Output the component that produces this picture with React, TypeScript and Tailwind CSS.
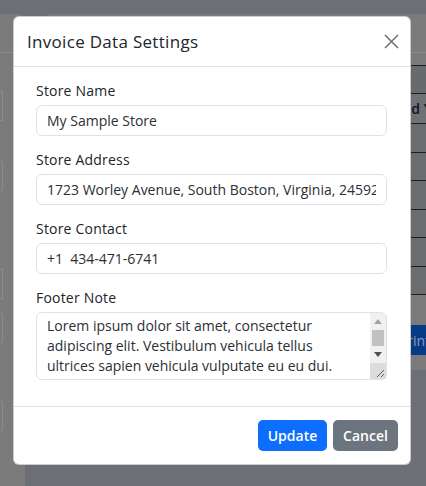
const fields = [
  { label: 'Store Name', value: 'My Sample Store' },
  { label: 'Store Address', value: '1723 Worley Avenue, South Boston, Virginia, 24592' },
  { label: 'Store Contact', value: '+1  434-471-6741' },
];

const footerNote =
  'Lorem ipsum dolor sit amet, consectetur adipiscing elit. Vestibulum vehicula tellus ultrices sapien vehicula vulputate eu eu dui. Sed at lorem nec nisi facilisis porttitor. Curabitur a nulla non tortor feugiat commodo.';

// classic scrollbar + resize corner drawn over the textarea
function FakeScrollbar() {
  return (
    <div className="pointer-events-none absolute right-[1px] top-[1px] bottom-[1px] flex w-[16px] flex-col overflow-hidden rounded-tr-[5px] bg-[#f1f1f1]">
      <div className="flex h-[17px] items-center justify-center">
        <svg width="8" height="5" viewBox="0 0 8 5"><path d="M4 0 L8 5 L0 5 Z" fill="#a3a3a3" /></svg>
      </div>
      <div className="mx-[2px] h-[16px] bg-[#c1c1c1]" />
      <div className="flex h-[17px] items-center justify-center">
        <svg width="8" height="5" viewBox="0 0 8 5"><path d="M0 0 L8 0 L4 5 Z" fill="#505050" /></svg>
      </div>
      <div className="flex flex-1 items-end justify-end bg-[#dcdcdc] p-[1px]">
        <svg width="10" height="10" viewBox="0 0 10 10">
          <path d="M9 2 L2 9 M9 6 L6 9" stroke="#5a5a5a" strokeWidth="1" />
        </svg>
      </div>
    </div>
  );
}

export default function App() {
  return (
    <div
      className="relative h-[486px] w-[426px] overflow-hidden bg-[#6c7075]"
      style={{ fontFamily: '"Open Sans", "Noto Sans", sans-serif' }}
    >
      {/* dimmed page behind the dialog */}
      <div className="flex h-full gap-[20px] pt-[14px]">
        <div className="flex w-[25px] flex-col rounded-tr-[6px] bg-[#7b7b7b]">
          <div className="mt-[38px] border-t border-[#8a8a8a]" />
          <div className="mt-[38px] h-[30px] w-[3px] border border-l-0 border-[#8c8c8c]" />
          <div className="mt-[40px] h-[30px] w-[3px] border border-l-0 border-[#8c8c8c]" />
          <div className="mt-[78px] h-[30px] w-[3px] border border-l-0 border-[#8c8c8c]" />
          <div className="mt-[14px] h-[30px] w-[3px] border border-l-0 border-[#8c8c8c]" />
          <div className="mt-[58px] h-[30px] w-[3px] border border-l-0 border-[#8c8c8c]" />
        </div>
        <div className="flex h-[356px] flex-1 flex-col rounded-tl-[6px] bg-[#7b7b7b]">
          <div className="h-[38px]" />
          <div className="h-[13px] border-t border-[#8a8a8a]" />
          <div className="h-[29px] border-y border-[#1e1e1e] bg-[#686b6d]" />
          <div className="flex h-[30px] items-center justify-end border-b border-[#1e1e1e] bg-[#6f7173] text-[14px] font-semibold text-[#0b1430]">
            <span className="-mr-[6px]">Paid Y</span>
          </div>
          {[0, 1, 2, 3, 4, 5].map((i) => (
            <div key={i} className="h-[28.5px] border-b border-[#1e1e1e] bg-[#6a6d70]" />
          ))}
          <div className="mt-[30px] flex h-[30px] items-center justify-end rounded-l-[4px] bg-[#083b86] text-[14px] text-[#8c97b3]">
            <span className="-mr-[4px]">Print</span>
          </div>
        </div>
      </div>

      {/* dialog */}
      <div className="absolute left-[13px] top-[16px] w-[398px] overflow-hidden rounded-[6px] border border-black/20 bg-white text-[#212529]">
        <div className="flex h-[50px] items-center justify-between border-b border-[#dee2e6] pl-[13px] pr-[11px]">
          <h5 className="text-[17px] font-medium tracking-[0.3px]">Invoice Data Settings</h5>
          <button type="button" className="flex h-[16px] w-[16px] items-center justify-center">
            <svg width="15" height="15" viewBox="0 0 15 15">
              <path d="M1 1 L14 14 M14 1 L1 14" stroke="#6f6f6f" strokeWidth="1.5" />
            </svg>
          </button>
        </div>

        <div className="pl-[22px] pr-[23px] pt-[14px] pb-[26px]">
          {fields.map((f) => (
            <div key={f.label} className="mb-[14px]">
              <label className="mb-[4px] block h-[20px] text-[14px] leading-[20px] tracking-[0.2px]">{f.label}</label>
              <input
                type="text"
                defaultValue={f.value}
                className="block h-[31px] w-full rounded-[6px] border border-[#dee2e6] px-[10px] text-[14px] text-[#2b3035] outline-none"
              />
            </div>
          ))}
          <label className="mb-[4px] block h-[20px] text-[14px] leading-[20px] tracking-[0.2px]">Footer Note</label>
          <div className="relative">
            <textarea
              defaultValue={footerNote}
              className="block h-[68px] w-full resize-none overflow-hidden rounded-[6px] border border-[#dee2e6] pl-[10px] pr-[32px] py-[3px] text-[14px] leading-[20px] text-[#2b3035] outline-none"
            />
            <FakeScrollbar />
          </div>
        </div>

        <div className="flex justify-end gap-[6px] border-t border-[#dee2e6] px-[12px] py-[13px]">
          <button
            type="button"
            className="h-[31px] w-[69px] rounded-[5px] bg-[#0d6efd] text-[14px] font-semibold text-white"
          >
            Update
          </button>
          <button
            type="button"
            className="h-[31px] w-[65px] rounded-[5px] bg-[#6c757d] text-[14px] font-semibold text-white"
          >
            Cancel
          </button>
        </div>
      </div>
    </div>
  );
}
